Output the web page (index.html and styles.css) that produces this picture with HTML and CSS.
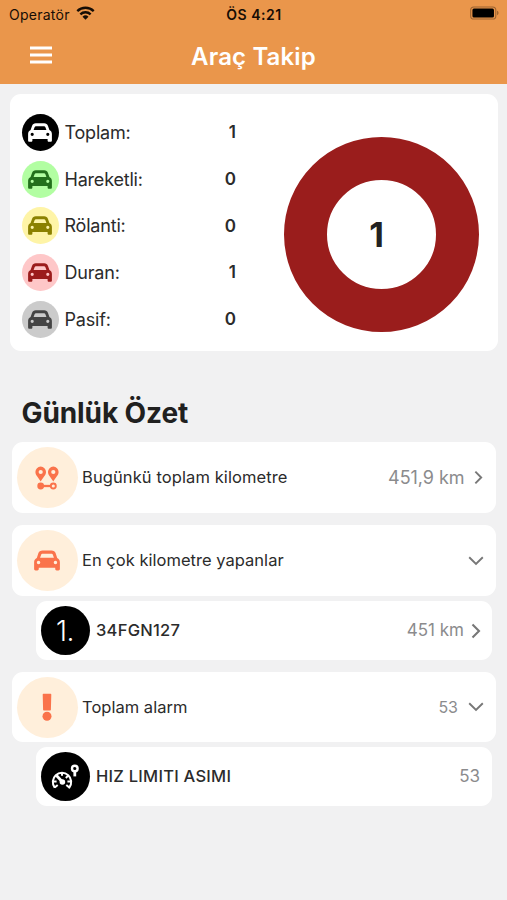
FILE: index.html
```html
<!DOCTYPE html>
<html lang="tr">
<head>
<meta charset="utf-8">
<title>Araç Takip</title>
<link rel="stylesheet" href="styles.css">
</head>
<body>
<svg class="defs" width="0" height="0" aria-hidden="true">
  <symbol id="car" viewBox="0 0 24 19">
    <path fill="currentColor" fill-rule="evenodd" d="M7.800.3h8.400c1.900 0 3.200.9 3.800 2.600l1.400 4.200c1.600.7 2.500 2.100 2.500 3.900v6.400c0 .8-.5 1.300-1.300 1.300h-1.700c-.8 0-1.300-.5-1.300-1.300v-1.300H4.400v1.300c0 .8-.5 1.300-1.300 1.300H1.400c-.8 0-1.300-.5-1.300-1.300V11c0-1.800.9-3.200 2.500-3.900L4 2.900C4.600 1.200 5.900.3 7.800.3zM8 3.200c-.7 0-1.200.3-1.400 1L5.600 7h12.800l-1-2.800c-.2-.7-.7-1-1.400-1zM4.200 9.700a1.600 1.600 0 1 0 0 3.200a1.600 1.600 0 0 0 0-3.200zm15.600 0a1.600 1.600 0 1 0 0 3.200a1.600 1.600 0 0 0 0-3.200z"/>
  </symbol>
  <symbol id="chevron" viewBox="0 0 10 16">
    <path d="M1.500 1.500 8 8l-6.500 6.500" fill="none" stroke="currentColor" stroke-width="2.100"/>
  </symbol>
</svg>
<header class="header">
  <div class="status">
    <div class="carrier"><span class="operator">Operatör</span>
      <svg class="wifi" viewBox="0 0 20 15"><g fill="none" stroke="#160d05" stroke-width="2.500"><path d="M1.200 5.500a12.500 12.500 0 0 1 17.600 0"/><path d="M4.500 9a7.800 7.800 0 0 1 11 0"/></g><path fill="#160d05" d="M10 14.600 6.800 11.400a4.600 4.600 0 0 1 6.400 0z"/></svg>
    </div>
    <div class="time">ÖS 4:21</div>
    <svg class="battery" viewBox="0 0 30 14"><rect x=".7" y=".7" width="26" height="12.600" rx="3.300" fill="none" stroke="#9b6331" stroke-width="1.100"/><rect x="2.500" y="2.300" width="22.300" height="9.400" rx="1.600"/><path fill="#9b6331" d="M28 4.800c2 .6 2 3.800 0 4.400z"/></svg>
  </div>
  <div class="navbar">
    <svg class="menu" viewBox="0 0 22 18"><path d="M0 2h22M0 9h22M0 16h22" stroke="#fff" stroke-width="3.200"/></svg>
    <h1>Araç Takip</h1>
  </div>
</header>
<main>
  <section class="overview">
    <ul class="stats">
      <li><span class="dot total"><svg><use href="#car"/></svg></span><span class="label">Toplam:</span><b>1</b></li>
      <li><span class="dot moving"><svg><use href="#car"/></svg></span><span class="label">Hareketli:</span><b>0</b></li>
      <li><span class="dot idle"><svg><use href="#car"/></svg></span><span class="label">Rölanti:</span><b>0</b></li>
      <li><span class="dot stopped"><svg><use href="#car"/></svg></span><span class="label">Duran:</span><b>1</b></li>
      <li><span class="dot passive"><svg><use href="#car"/></svg></span><span class="label">Pasif:</span><b>0</b></li>
    </ul>
    <div class="donut"><span>1</span></div>
  </section>
  <h2>Günlük Özet</h2>
  <div class="row">
    <span class="badge"><svg class="route" viewBox="0 0 24 24"><path fill="currentColor" fill-rule="evenodd" d="M5.700.6A5.300 5.300 0 0 0 .4 5.900c0 3.600 3.300 5.500 5.300 9.600 2-4.100 5.300-6 5.300-9.600A5.300 5.300 0 0 0 5.700.6zm0 3.300a2.100 2.100 0 1 1 0 4.200 2.100 2.100 0 0 1 0-4.200zM18.300.6A5.300 5.300 0 0 0 13 5.900c0 3.600 3.300 5.500 5.300 9.600 2-4.100 5.300-6 5.300-9.600A5.300 5.300 0 0 0 18.300.6zm0 3.300a2.100 2.100 0 1 1 0 4.200 2.100 2.100 0 0 1 0-4.200z"/><circle cx="5.700" cy="20" r="3.400" fill="currentColor"/><path d="M8 20h7.500" stroke="currentColor" stroke-width="2.300"/><circle cx="18.300" cy="20" r="2.500" fill="none" stroke="currentColor" stroke-width="1.900"/></svg></span>
    <span class="name">Bugünkü toplam kilometre</span>
    <span class="value big">451,9 km</span>
    <svg class="chev"><use href="#chevron"/></svg>
  </div>
  <div class="row second">
    <span class="badge"><svg class="carbig"><use href="#car"/></svg></span>
    <span class="name tight">En çok kilometre yapanlar</span>
    <svg class="down" viewBox="0 0 16 10"><path d="M1.200 1.300 8 8l6.800-6.700"/></svg>
  </div>
  <div class="sub">
    <span class="disc"><span class="rank">1.</span></span>
    <span class="name">34FGN127</span>
    <span class="value">451 km</span>
    <svg class="chev large"><use href="#chevron"/></svg>
  </div>
  <div class="row third">
    <span class="badge"><svg class="alert" viewBox="0 0 10 28"><path fill="currentColor" d="M1.400.8h7.200c.4 0 .7.300.7.700l-.4 15.200c0 .5-.3.800-.8.800H1.900c-.5 0-.8-.3-.8-.8L.7 1.500c0-.4.3-.7.700-.7z"/><circle cx="5" cy="23.200" r="4.500" fill="currentColor"/></svg></span>
    <span class="name tight">Toplam alarm</span>
    <span class="value small">53</span>
    <svg class="down" viewBox="0 0 16 10"><path d="M1.200 1.300 8 8l6.800-6.700"/></svg>
  </div>
  <div class="sub">
    <span class="disc"><svg class="gauge" viewBox="0 0 28 26"><g fill="none" stroke="#fff"><path stroke-width="2" stroke-linejoin="round" d="M3.700 23.600a9.200 9.200 0 1 1 14.600 0l-3-2.500M3.700 23.600l3-2.500"/><path stroke-width="2" d="M1.900 17.500h3.700M20.100 17.500h-3.700M11 8.500v3.200M17.300 11.600l-2.500 2.300"/><path stroke-width="2.800" d="M5.500 11.500 11 17.500"/><circle cx="23.800" cy="4.500" r="2.800" stroke-width="2.400"/><path stroke-width="2.800" d="M23.800 7v5.400"/></g><circle cx="11.400" cy="18" r="2.800" fill="#fff"/></svg></span>
    <span class="name">HIZ LIMITI ASIMI</span>
    <span class="value">53</span>
  </div>
</main>
</body>
</html>
```
FILE: styles.css
```css
* { box-sizing: border-box; }
body {
  margin: 0;
  min-height: 900px;
  background: #f1f1f2;
  color: #2b2b2b;
  font-family: Inter, "Liberation Sans", sans-serif;
  font-size: 17px;
  white-space: nowrap;
}
svg { display: block; flex: none; }
.defs { position: absolute; }
.header { height: 84px; background: #ea964b; }
.status {
  height: 28px;
  display: grid;
  grid-template-columns: 1fr auto 1fr;
  align-items: center;
  padding: 0 8px 0 9px;
  font-size: 14px;
  color: #160d05;
}
.carrier { display: flex; align-items: center; gap: 6px; }
.operator { width: 61px; letter-spacing: .25px; }
.wifi { width: 19px; height: 14px; margin-bottom: 2px; }
.time { font-weight: 600; letter-spacing: .5px; }
.battery { width: 29px; height: 14px; justify-self: end; margin-bottom: 2px; }
.navbar {
  height: 56px;
  display: grid;
  grid-template-columns: 53px 1fr 53px;
  align-items: center;
}
.menu { width: 22px; height: 18px; margin: 0 0 3px 30px; }
h1 { margin: 2px 0 0; text-align: center; color: #fff; font-size: 24px; font-weight: 600; line-height: 30px; letter-spacing: .15px; }
main { padding: 10px 0 0; }
.overview {
  display: flex;
  width: 488px;
  height: 257px;
  margin-left: 10px;
  background: #fff;
  border-radius: 11px;
}
.stats { list-style: none; margin: 0; padding: 15px 0 0 11.5px; width: 226px; }
.stats li { display: flex; align-items: center; height: 46.700px; }
.stats .label { margin-left: 6px; font-size: 18px; letter-spacing: -.2px; }
.stats b { margin-left: auto; font-size: 17px; font-weight: 600; }
.dot { width: 37px; height: 37px; border-radius: 50%; display: grid; place-items: center; }
.dot svg { width: 24px; height: 19px; }
.total { background: #000; color: #fff; }
.moving { background: #b2fea2; color: #23701c; }
.idle { background: #fef4a7; color: #8b8100; }
.stopped { background: #fec7c8; color: #9b1c1c; }
.passive { background: #cbcbcb; color: #444; }
.donut {
  width: 195px;
  height: 195px;
  margin: 43px 0 0 48px;
  border: 43px solid #9a1d1c;
  border-radius: 50%;
  display: grid;
  place-items: center;
}
.donut span { font-size: 34px; line-height: 40px; font-weight: 700; margin-right: 10px; color: #222; }
h2 { margin: 43px 0 10px 21.5px; font-size: 28px; line-height: 38px; font-weight: 700; letter-spacing: -.1px; color: #202020; }
.row, .sub { display: flex; align-items: center; background: #fff; border-radius: 11px; }
.row { width: 484px; height: 71px; margin-left: 12px; padding: 0 12px 0 4.500px; }
.second { margin-top: 12px; }
.third { height: 70px; margin-top: 12px; }
.sub { width: 456px; height: 59px; margin: 5px 0 0 36px; padding: 0 12px 0 4.500px; }
.badge { width: 61px; height: 61px; border-radius: 50%; background: #ffefdb; color: #fa734b; display: grid; place-items: center; }
.carbig { width: 26px; height: 21px; }
.route { width: 24px; height: 24px; }
.alert { width: 10px; height: 28px; }
.disc { width: 49px; height: 49px; border-radius: 50%; background: #000; color: #fff; display: grid; place-items: center; }
.rank { font-size: 28px; font-weight: 300; letter-spacing: -.5px; }
.gauge { width: 28px; height: 26px; }
.name { font-size: 16.500px; margin: 0 0 2px 4.500px; letter-spacing: .1px; }
.name.tight { letter-spacing: .02px; }
.third .name { margin-bottom: 0; }
.sub .name { margin-left: 6.500px; font-weight: 500; letter-spacing: .25px; }
.value { margin-left: auto; color: #8b8b8d; font-size: 17px; }
.value.big { font-size: 18px; letter-spacing: -.05px; }
.value.small { font-size: 16px; }
.sub .value { margin-bottom: 1px; }
.chev { width: 9px; height: 15px; margin: 0 1.500px 0 9px; color: #777; }
.chev.large { width: 10px; height: 16px; margin: 0 -1px 0 7px; }
.down { width: 16px; height: 10px; margin-left: auto; fill: none; stroke: #777; stroke-width: 1.900; }
.value + .down { margin-left: 10px; }
```
